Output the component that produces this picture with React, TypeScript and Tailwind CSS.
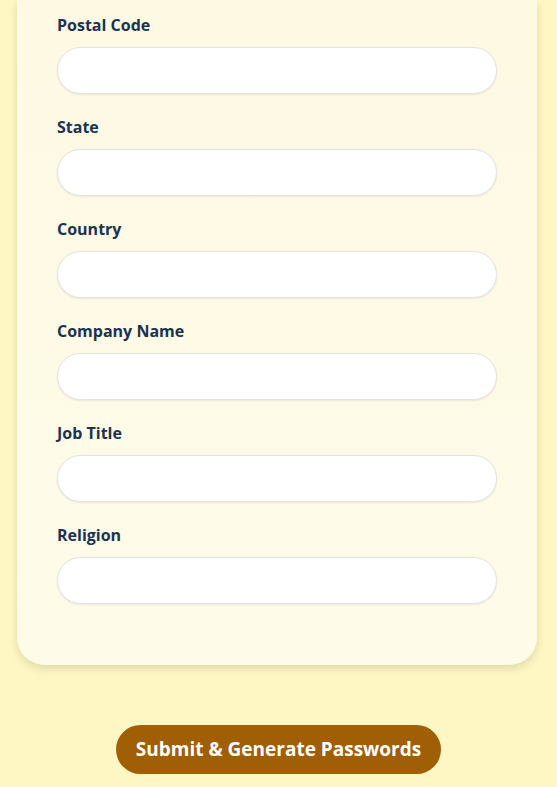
const fields = ["Postal Code", "State", "Country", "Company Name", "Job Title", "Religion"];

export default function App() {
  return (
    <div className="min-h-[787px] bg-[#fef7c3] px-[17px] pb-6" style={{ fontFamily: "'Open Sans', Lato, sans-serif" }}>
      <div className="w-[520px] rounded-b-[28px] bg-gradient-to-b from-[#fdf9e3] to-[#fefbe9] px-10 pt-[13px] pb-[61px] shadow-[0_4px_10px_rgba(0,0,0,0.12)]">
        {fields.map((f) => (
          <div key={f} className="mb-[21px] last:mb-0">
            <label className="mb-2.5 block text-[16px] leading-6 font-bold text-[#1b3350]">{f}</label>
            <input
              type="text"
              className="block h-[47px] w-full rounded-full border border-[#e3e3e3] bg-white px-5 shadow-[0_1px_2px_rgba(0,0,0,0.08)] outline-none"
            />
          </div>
        ))}
      </div>
      <div className="mt-[60px] flex justify-center">
        <button className="h-[49px] rounded-full bg-[#a15f05] px-5 text-[19px] font-bold text-white">
          Submit &amp; Generate Passwords
        </button>
      </div>
    </div>
  );
}
